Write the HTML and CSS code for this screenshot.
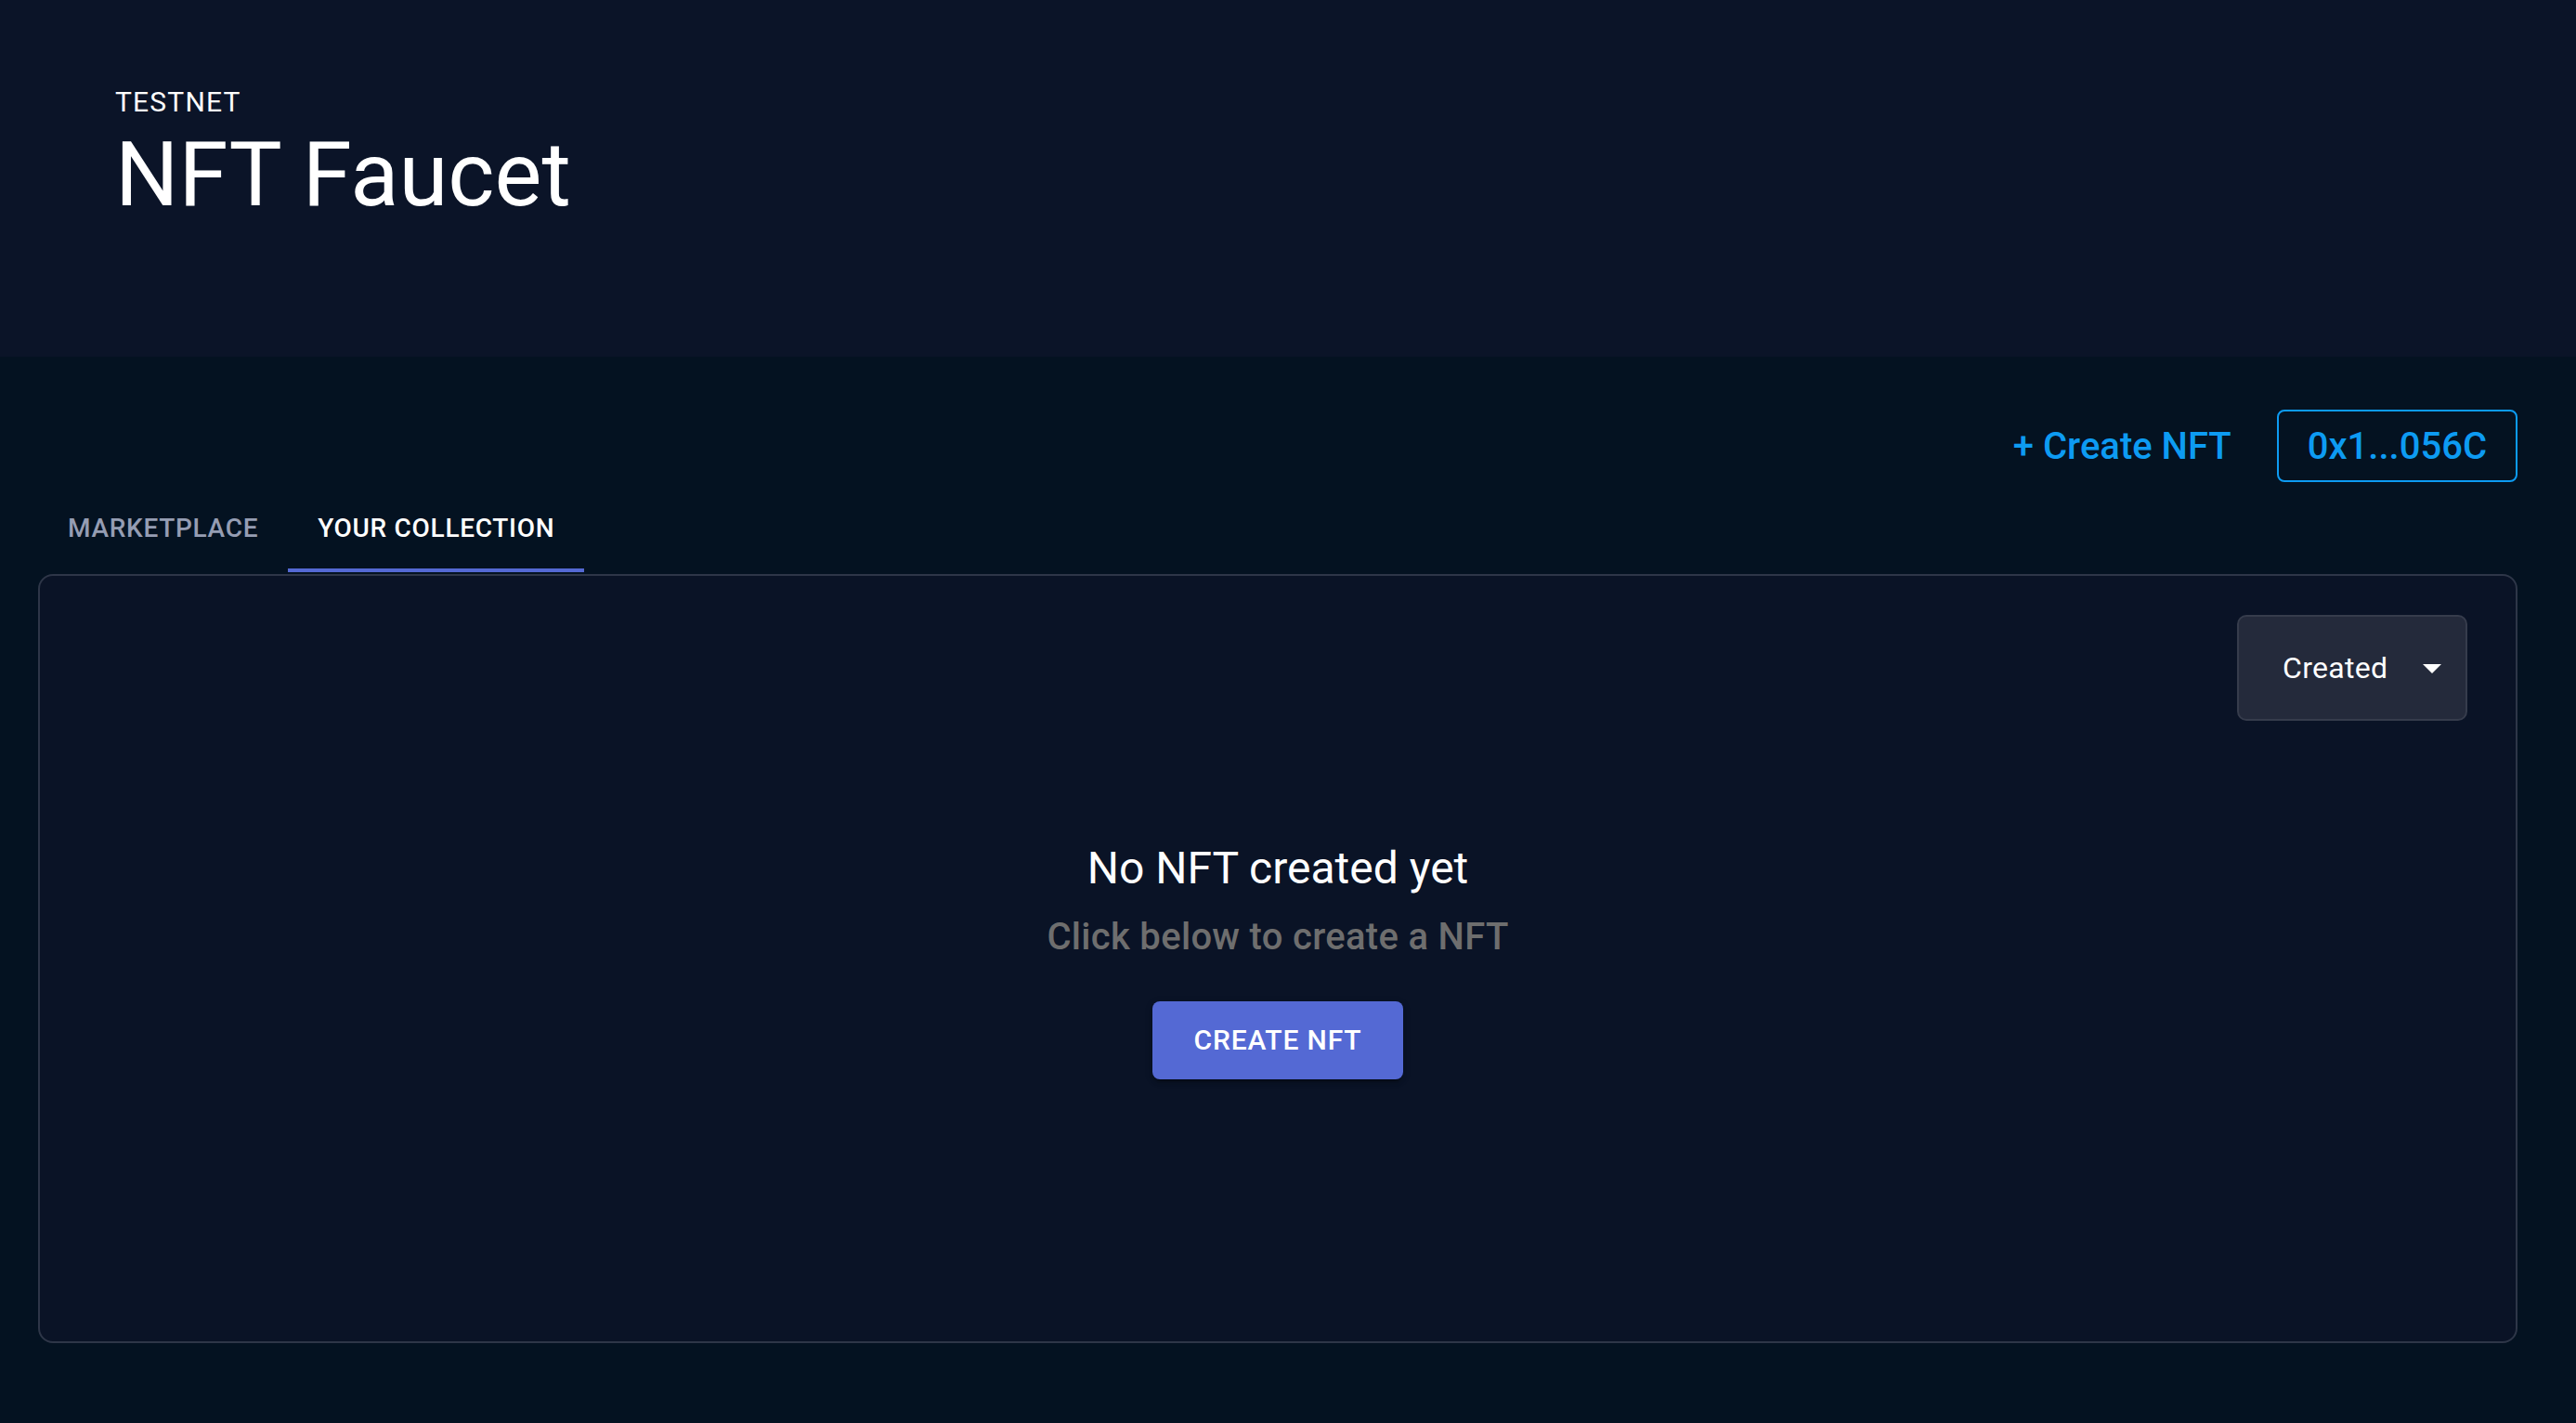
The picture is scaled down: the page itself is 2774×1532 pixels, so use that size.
FILE: index.html
```html
<!DOCTYPE html>
<html lang="en">
<head>
<meta charset="utf-8">
<title>NFT Faucet</title>
<link rel="stylesheet" href="styles.css">
</head>
<body>
<header class="hero">
  <div class="hero-kicker">TESTNET</div>
  <h1 class="hero-title">NFT Faucet</h1>
</header>
<main class="main">
  <div class="actions">
    <a class="create-link" href="#">+ Create NFT</a>
    <button class="address-btn" type="button">0x1...056C</button>
  </div>
  <nav class="tabs">
    <div class="tab">Marketplace</div>
    <div class="tab tab-active">Your Collection</div>
  </nav>
  <section class="card">
    <div class="select">
      <span class="select-value">Created</span>
      <svg class="select-caret" width="20" height="10" viewBox="0 0 20 10"><polygon points="0,0 20,0 10,10" fill="#ffffff"/></svg>
    </div>
    <div class="empty">
      <h2 class="empty-title">No NFT created yet</h2>
      <p class="empty-sub">Click below to create a NFT</p>
      <button class="primary-btn" type="button">Create NFT</button>
    </div>
  </section>
</main>
</body>
</html>
```
FILE: styles.css
```css
* { box-sizing: border-box; }
html, body {
  margin: 0;
  padding: 0;
  background: #041221;
  font-family: Roboto, "Liberation Sans", Arial, sans-serif;
  color: #ffffff;
}
.hero {
  height: 384px;
  background: #0b1428;
  padding: 87px 0 0 124px;
}
.hero-kicker {
  font-size: 30px;
  line-height: 45px;
  font-weight: 400;
  letter-spacing: 1.2px;
}
.hero-title {
  margin: 0;
  font-size: 96px;
  line-height: 112px;
  font-weight: 400;
  letter-spacing: 0;
}
.main {
  padding: 57px 63px 0 41px;
}
.actions {
  display: flex;
  justify-content: flex-end;
  align-items: center;
  gap: 49px;
}
.create-link {
  color: #0d9bf2;
  text-decoration: none;
  font-size: 40px;
  font-weight: 500;
}
.address-btn {
  height: 78px;
  padding: 0 31px;
  background: transparent;
  border: 2px solid #0d9bf2;
  border-radius: 8px;
  color: #0d9bf2;
  font-family: inherit;
  font-size: 40px;
  font-weight: 500;
  display: flex;
  align-items: center;
}
.tabs {
  display: flex;
  margin-top: 1px;
}
.tab {
  height: 96px;
  padding: 0 32px;
  display: flex;
  align-items: center;
  font-size: 28px;
  font-weight: 500;
  letter-spacing: 0.7px;
  text-transform: uppercase;
  color: #959db3;
}
.tab-active {
  color: #ffffff;
  box-shadow: inset 0 -4px 0 #5469d4;
}
.card {
  margin-top: 2px;
  height: 828px;
  border: 2px solid #2e3648;
  border-radius: 16px;
  background: #0a1326;
  display: grid;
  grid-template: 1fr / 1fr;
  padding: 42px 52px 42px 52px;
}
.select, .empty { grid-area: 1 / 1; }
.select {
  justify-self: end;
  align-self: start;
  width: 248px;
  height: 114px;
  background: #242a3b;
  border: 2px solid #363c4c;
  border-radius: 10px;
  display: flex;
  align-items: center;
  padding: 0 0 0 47px;
}
.select-value {
  font-size: 32px;
  font-weight: 400;
  letter-spacing: 0.3px;
  color: #ffffff;
}
.select-caret {
  margin-left: 38px;
  margin-top: 2px;
}
.empty {
  align-self: center;
  justify-self: center;
  display: flex;
  flex-direction: column;
  align-items: center;
}
.empty-title {
  margin: 0;
  font-size: 48px;
  line-height: 64px;
  font-weight: 400;
}
.empty-sub {
  margin: 10px 0 0;
  font-size: 40px;
  line-height: 64px;
  font-weight: 500;
  letter-spacing: 0.3px;
  color: #6e6e6e;
}
.primary-btn {
  margin-top: 37px;
  height: 84px;
  padding: 0 44px;
  background: #5469d4;
  border: none;
  border-radius: 8px;
  color: #ffffff;
  font-family: inherit;
  font-size: 30px;
  font-weight: 500;
  letter-spacing: 0.85px;
  text-transform: uppercase;
  box-shadow: 0 6px 2px -4px rgba(0,0,0,0.2), 0 4px 4px 0 rgba(0,0,0,0.14), 0 2px 10px 0 rgba(0,0,0,0.12);
}
```
